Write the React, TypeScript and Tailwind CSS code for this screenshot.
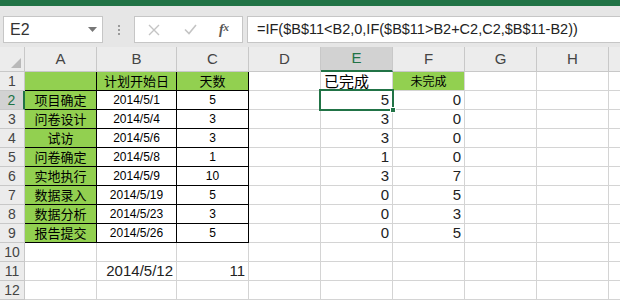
import React from "react";

const cols = ["A", "B", "C", "D", "E", "F", "G", "H", ""];
const tasks = [
  ["项目确定", "2014/5/1", "5", "5", "0"],
  ["问卷设计", "2014/5/4", "3", "3", "0"],
  ["试访", "2014/5/6", "3", "3", "0"],
  ["问卷确定", "2014/5/8", "1", "1", "0"],
  ["实地执行", "2014/5/9", "10", "3", "7"],
  ["数据录入", "2014/5/19", "5", "0", "5"],
  ["数据分析", "2014/5/23", "3", "0", "3"],
  ["报告提交", "2014/5/26", "5", "0", "5"],
];

const cjk = "font-['Microsoft_YaHei','Noto_Sans_CJK_SC',sans-serif]";
const num = "font-['Liberation_Sans',Arial,sans-serif]";

function Cell({ children, className = "" }: { children?: React.ReactNode; className?: string }) {
  return (
    <div className={`h-[19px] border-r border-b border-[#d4d4d4] flex items-center overflow-visible whitespace-nowrap ${className}`}>
      {children}
    </div>
  );
}

// black bordered range A1:C9
const boxed = "border-r-black border-b-black";

export default function App() {
  const rows: React.ReactNode[] = [];

  for (let r = 1; r <= 12; r++) {
    const selRow = r === 2;
    rows.push(
      <div
        key={`h${r}`}
        className={`h-[19px] border-b border-[#c8c8c8] flex items-center justify-center text-[14px] ${num} ${
          selRow ? "bg-[#d2d2d2] text-[#217346] border-r-2 border-r-[#217346]" : "bg-[#ececec] text-[#444] border-r border-r-[#c8c8c8]"
        }`}
      >
        {r}
      </div>
    );
    const t = r >= 2 && r <= 9 ? tasks[r - 2] : null;
    // A
    rows.push(
      <Cell key={`a${r}`} className={r <= 9 ? `bg-[#92d050] justify-center ${boxed} text-[13px] text-black ${cjk}` : ""}>
        {t ? t[0] : ""}
      </Cell>
    );
    // B
    rows.push(
      <Cell
        key={`b${r}`}
        className={
          r === 1
            ? `bg-[#92d050] justify-center ${boxed} text-[13px] ${cjk}`
            : r <= 9
            ? `justify-center ${boxed} text-[12px] ${num}`
            : r === 11
            ? `justify-end pr-[3px] text-[15px] text-[#222] ${num}`
            : ""
        }
      >
        {r === 1 ? "计划开始日" : t ? t[1] : r === 11 ? "2014/5/12" : ""}
      </Cell>
    );
    // C
    rows.push(
      <Cell
        key={`c${r}`}
        className={
          r === 1
            ? `bg-[#92d050] justify-center ${boxed} text-[13px] ${cjk}`
            : r <= 9
            ? `justify-center ${boxed} text-[12px] ${num}`
            : r === 11
            ? `justify-end pr-[3px] text-[15px] text-[#222] ${num}`
            : ""
        }
      >
        {r === 1 ? "天数" : t ? t[2] : r === 11 ? "11" : ""}
      </Cell>
    );
    // D
    rows.push(<Cell key={`d${r}`} />);
    // E
    rows.push(
      <Cell
        key={`e${r}`}
        className={
          r === 1
            ? `pl-[3px] text-[15px] ${cjk}`
            : t
            ? `justify-end pr-[3px] text-[15px] text-[#222] ${num} ${selRow ? "relative" : ""}`
            : ""
        }
      >
        {r === 1 ? "已完成" : t ? t[3] : ""}
        {selRow && (
          <>
            <div className="absolute left-[-2px] top-[-2px] right-[-2px] bottom-[-2px] border-2 border-[#217346] pointer-events-none" />
            <div className="absolute right-[-4px] bottom-[-4px] w-[6px] h-[6px] bg-[#217346] border border-white" />
          </>
        )}
      </Cell>
    );
    // F
    rows.push(
      <Cell
        key={`f${r}`}
        className={
          r === 1
            ? `bg-[#92d050] justify-center text-[12px] ${cjk}`
            : t
            ? `justify-end pr-[3px] text-[15px] text-[#222] ${num}`
            : ""
        }
      >
        {r === 1 ? "未完成" : t ? t[4] : ""}
      </Cell>
    );
    rows.push(<Cell key={`g${r}`} />);
    rows.push(<Cell key={`hh${r}`} />);
    rows.push(<Cell key={`i${r}`} />);
  }

  return (
    <div className="w-[620px] h-[301px] overflow-hidden bg-white">
      <div className="h-[6px] bg-[#217346]" />
      <div className="bg-[#e6e6e6] h-[41px] flex items-start pt-[10px] pl-[3px]">
        <div className={`w-[100px] h-[27px] bg-white border border-[#c6c6c6] flex items-center justify-between pl-[6px] pr-[5px] text-[16px] text-[#333] ${num}`}>
          <span>E2</span>
          <svg width="9" height="5" viewBox="0 0 9 5">
            <path d="M0 0 L9 0 L4.5 5 Z" fill="#777" />
          </svg>
        </div>
        <div className="w-[31px] h-[27px] flex flex-col items-center justify-center gap-[2px]">
          <span className="w-[2px] h-[2px] bg-[#9a9a9a]" />
          <span className="w-[2px] h-[2px] bg-[#9a9a9a]" />
          <span className="w-[2px] h-[2px] bg-[#9a9a9a]" />
        </div>
        <div className="w-[109px] h-[27px] bg-white border border-[#c6c6c6] flex items-center">
          <div className="w-[38px] flex justify-center">
            <svg width="12" height="12" viewBox="0 0 12 12">
              <path d="M1 1 L11 11 M11 1 L1 11" stroke="#c4c4c4" strokeWidth="1.4" />
            </svg>
          </div>
          <div className="w-[34px] flex justify-center">
            <svg width="13" height="11" viewBox="0 0 13 11">
              <path d="M1 5.5 L5 9.5 L12 1" stroke="#c4c4c4" strokeWidth="1.6" fill="none" />
            </svg>
          </div>
          <div className="w-[34px] flex justify-center text-[14px] italic text-[#555] font-['Liberation_Serif',serif] font-bold">
            f<span className="text-[11px]">x</span>
          </div>
        </div>
        <div className={`ml-[4px] flex-1 h-[27px] bg-white border border-[#c6c6c6] border-r-0 flex items-center pl-[9px] text-[14.5px] text-[#222] ${num}`}>
          =IF($B$11&lt;B2,0,IF($B$11&gt;B2+C2,C2,$B$11-B2))
        </div>
      </div>
      <div className="grid grid-cols-[25px_72px_80px_72px_72px_72px_72px_72px_72px_12px]">
        <div className="h-[25px] bg-[#ececec] border-r border-b border-[#c8c8c8] relative">
          <svg className="absolute right-[3px] bottom-[3px]" width="10" height="10" viewBox="0 0 10 10">
            <path d="M10 0 L10 10 L0 10 Z" fill="#b9b9b9" />
          </svg>
        </div>
        {cols.map((c) => (
          <div
            key={c || "x"}
            className={`h-[25px] border-r flex items-center justify-center text-[15px] ${num} ${
              c === "E"
                ? "bg-[#d2d2d2] text-[#217346] border-b-2 border-b-[#217346] border-r-[#c8c8c8]"
                : "bg-[#ececec] text-[#444] border-b border-[#c8c8c8]"
            }`}
          >
            {c}
          </div>
        ))}
        {rows}
      </div>
    </div>
  );
}
